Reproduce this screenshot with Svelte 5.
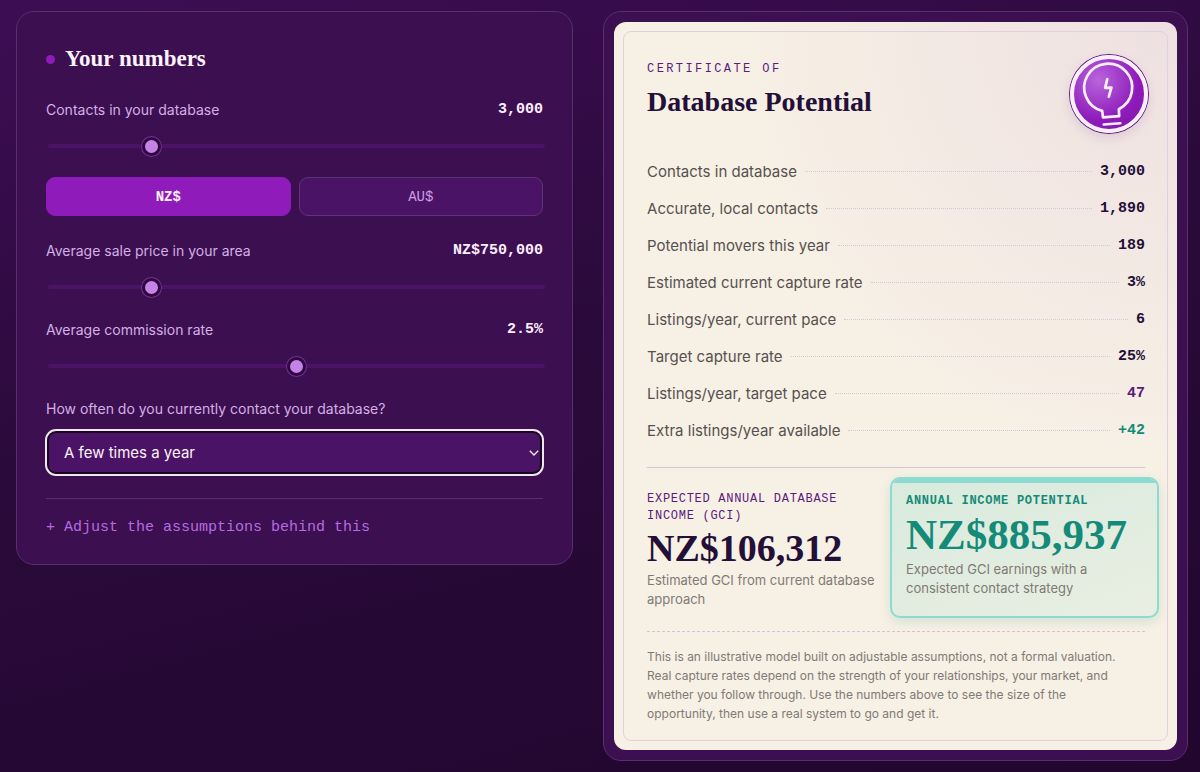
<script lang="ts">
let contacts = $state(3000);
let currency = $state("NZ$");
let price = $state(750000);
let commission = $state(2.5);
let frequency = $state("few");

const currencies = ["NZ$", "AU$"];

// Current capture rate for each contact habit.
const captureRates: Record<string, number> = { never: 0.01, yearly: 0.02, few: 0.03, monthly: 0.1 };
const accuracy = 0.63;
const moveRate = 0.1;
const targetRate = 0.25;

let local = $derived(Math.round(contacts * accuracy));
let movers = $derived(local * moveRate);
let rate = $derived(captureRates[frequency]);
let currentListings = $derived(movers * rate);
let targetListings = $derived(movers * targetRate);
let fee = $derived((price * commission) / 100);

const format = (n: number) => Math.round(n).toLocaleString("en-US");
const money = (n: number) => currency + Math.floor(n).toLocaleString("en-US");

let rows = $derived([
  { label: "Contacts in database", value: format(contacts) },
  { label: "Accurate, local contacts", value: format(local) },
  { label: "Potential movers this year", value: format(movers) },
  { label: "Estimated current capture rate", value: `${rate * 100}%` },
  { label: "Listings/year, current pace", value: format(currentListings) },
  { label: "Target capture rate", value: `${targetRate * 100}%` },
  { label: "Listings/year, target pace", value: format(targetListings), tone: "purple" },
  { label: "Extra listings/year available", value: `+${format(targetListings - currentListings)}`, tone: "green" },
]);
</script>

<main class="calculator">
  <section class="card inputs">
    <h2>Your numbers</h2>

    <div class="field">
      <div class="field-head">
        <label for="contacts">Contacts in your database</label>
        <output for="contacts">{format(contacts)}</output>
      </div>
      <input id="contacts" type="range" min="50" max="15000" step="50" bind:value={contacts} />
    </div>

    <div class="toggle">
      {#each currencies as code}
        <button class:active={currency === code} aria-pressed={currency === code} onclick={() => (currency = code)}>
          {code}
        </button>
      {/each}
    </div>

    <div class="field">
      <div class="field-head">
        <label for="price">Average sale price in your area</label>
        <output for="price">{money(price)}</output>
      </div>
      <input id="price" type="range" min="200000" max="3000000" step="10000" bind:value={price} />
    </div>

    <div class="field">
      <div class="field-head">
        <label for="commission">Average commission rate</label>
        <output for="commission">{commission}%</output>
      </div>
      <input id="commission" type="range" min="1" max="4" step="0.1" bind:value={commission} />
    </div>

    <div class="question">
      <label for="frequency">How often do you currently contact your database?</label>
      <div class="select">
        <select id="frequency" bind:value={frequency}>
          <option value="never">Rarely or never</option>
          <option value="yearly">Once a year</option>
          <option value="few">A few times a year</option>
          <option value="monthly">Every month</option>
        </select>
        <svg width="10" height="6" viewBox="0 0 10 6" fill="none" stroke="#fdf3fb" stroke-width="1.3" aria-hidden="true">
          <path d="M.8 .8L5 5L9.2 .8" />
        </svg>
      </div>
    </div>

    <div class="assumptions">
      <button>+ Adjust the assumptions behind this</button>
    </div>
  </section>

  <section class="card frame">
    <div class="paper">
      <header>
        <div>
          <p class="eyebrow">Certificate of</p>
          <h1>Database Potential</h1>
        </div>
        <div class="seal">
          <svg viewBox="-35 -35 70 70" fill="none" stroke="#fdeefc" stroke-linecap="round" stroke-linejoin="round" aria-hidden="true">
            <path d="M-6 23.4L-6.8 16.9A24 24 0 1 1 9.8 15.2L10.2 22.2Z" stroke-width="2.7" />
            <path d="M-5.4 30.6L11.4 29.2" stroke-width="2.5" />
            <path d="M-1.7 -14.8L-3.9 -6.2L2.4 -6.4L-.2 2.6" stroke-width="2.7" />
          </svg>
        </div>
      </header>

      <dl class="rows">
        {#each rows as row}
          <div class="row">
            <dt>{row.label}</dt>
            <dd class={row.tone}>{row.value}</dd>
          </div>
        {/each}
      </dl>

      <div class="figures">
        <div class="figure">
          <p class="caption">Expected annual database income (GCI)</p>
          <p class="amount">{money(currentListings * fee)}</p>
          <p class="note">Estimated GCI from current database approach</p>
        </div>
        <div class="figure highlight">
          <p class="caption">Annual income potential</p>
          <p class="amount">{money(targetListings * fee)}</p>
          <p class="note">Expected GCI earnings with a consistent contact strategy</p>
        </div>
      </div>

      <p class="disclaimer">
        This is an illustrative model built on adjustable assumptions, not a formal valuation. Real capture rates
        depend on the strength of your relationships, your market, and whether you follow through. Use the numbers
        above to see the size of the opportunity, then use a real system to go and get it.
      </p>
    </div>
  </section>
</main>

<style>
:global(body) {
  min-height: 100vh;
  background: linear-gradient(165deg, #3d0d54 0%, #2a0a3a 45%, #22062e 100%);
  font-family: Inter, "Liberation Sans", sans-serif;
}

.calculator {
  box-sizing: border-box;
  display: grid;
  grid-template-columns: 1fr 1.05fr;
  align-items: start;
  gap: 30px;
  padding: 11px 12px 10px 16px;
}

h1,
h2,
p,
dl,
dd {
  margin: 0;
}

.card {
  background: #3b0f50;
  border: 1px solid #57306c;
  border-radius: 18px;
}

.inputs {
  padding: 29px 29px 24px;
}

h2 {
  display: flex;
  align-items: center;
  gap: 10px;
  margin-bottom: 21px;
  color: #fdf3fb;
  font: bold 23px/36px "Liberation Serif", serif;
}

h2::before {
  content: "";
  width: 9px;
  height: 9px;
  border-radius: 50%;
  background: #8e1bba;
}

label {
  color: #d4b0e4;
  font-size: 14px;
  line-height: 24px;
}

.field {
  margin-bottom: 29px;
}

.field-head {
  display: flex;
  justify-content: space-between;
}

output {
  color: #fdeefc;
  font: bold 15px/24px "Liberation Mono", monospace;
}

input[type="range"] {
  appearance: none;
  display: block;
  width: 100%;
  height: 4px;
  margin: 22px 2px 0;
  border-radius: 2px;
  background: #4b1365;
}

input[type="range"]::-webkit-slider-thumb {
  appearance: none;
  box-sizing: border-box;
  width: 19px;
  height: 19px;
  border: 3px solid #2d0a3d;
  border-radius: 50%;
  background: #c583e8;
  box-shadow: 0 0 0 1px #7a2a9c;
}

.toggle {
  display: grid;
  grid-template-columns: 1fr 1fr;
  gap: 8px;
  margin-bottom: 23px;
}

.toggle button {
  height: 39px;
  border: 1px solid #5f3477;
  border-radius: 9px;
  background: #4b1365;
  color: #cba0e0;
  font: 14px "Liberation Mono", monospace;
}

.toggle .active {
  border-color: #8e1bba;
  background: #8e1bba;
  color: #fdf3fb;
  font-weight: bold;
}

.question label {
  display: block;
  margin-bottom: 9px;
}

.select {
  position: relative;
}

.select svg {
  position: absolute;
  top: 20px;
  right: 4px;
  pointer-events: none;
}

select {
  appearance: none;
  display: block;
  box-sizing: border-box;
  width: 100%;
  height: 45px;
  padding: 0 24px 0 15px;
  border: 3px solid #18071f;
  border-radius: 10px;
  outline: 2px solid #efe6f2;
  outline-offset: -1px;
  background: #4b1365;
  color: #fdf3fb;
  font: 15px Inter, "Liberation Sans", sans-serif;
}

.assumptions {
  margin-top: 23px;
  padding-top: 17px;
  border-top: 1px solid #57306c;
}

.assumptions button {
  display: block;
  padding: 0;
  border: 0;
  background: none;
  color: #b86be0;
  font: 15px/24px "Liberation Mono", monospace;
}

.frame {
  padding: 10px;
}

.paper {
  position: relative;
  padding: 33px 32px 27px 33px;
  border-radius: 12px;
  background: radial-gradient(circle at 100% 0, #eee0e1 0%, #f7f0e5 48%);
}

.paper::before {
  content: "";
  position: absolute;
  inset: 9px;
  border: 1px solid #e0d0e2;
  border-radius: 8px;
  pointer-events: none;
}

header {
  display: flex;
  justify-content: space-between;
  margin-bottom: 20px;
}

.eyebrow {
  margin-top: 5px;
  color: #5b1a7c;
  font: 12px/18px "Liberation Mono", monospace;
  letter-spacing: 0.2em;
  text-transform: uppercase;
}

h1 {
  margin-top: 6px;
  color: #230f38;
  font: bold 28px/36px "Liberation Serif", serif;
}

.seal {
  box-sizing: border-box;
  width: 78px;
  height: 78px;
  margin-right: -3px;
  border: 4px solid #fdeefc;
  border-radius: 50%;
  background: radial-gradient(circle at 35% 30%, #b865dc 0%, #8e1bba 60%, #7d15a8 100%);
  box-shadow: 0 0 0 1px #5b1a7c, 0 4px 12px rgba(91, 26, 124, 0.15);
}

.seal svg {
  display: block;
  width: 100%;
}

.row {
  display: flex;
  align-items: center;
  height: 37px;
  font-size: 15px;
}

.row dt {
  color: #56504f;
}

.row dd {
  display: flex;
  flex: 1;
  align-items: center;
  color: #230f38;
  font: bold 15px/24px "Liberation Mono", monospace;
}

.row dd::before {
  content: "";
  flex: 1;
  margin: 0 8px;
  border-top: 1px dotted #d6c6d8;
}

.row .purple {
  color: #5b1a7c;
}

.row .green {
  color: #148a78;
}

.figures {
  display: grid;
  grid-template-columns: 1fr 1fr;
  gap: 16px;
  margin-top: 18px;
  padding: 9px 0 13px;
  border-top: 1px solid #d6c3d6;
}

.figure {
  padding-top: 14px;
}

.caption {
  color: #5b1a7c;
  font: 12px/17px "Liberation Mono", monospace;
  letter-spacing: 0.06em;
  text-transform: uppercase;
}

.amount {
  margin: 2px 0;
  color: #230f38;
  font: bold 38px/42px "Liberation Serif", serif;
}

.note {
  color: #807a75;
  font-size: 13px;
  line-height: 19px;
}

.highlight {
  position: relative;
  overflow: hidden;
  margin: 0 -14px;
  padding: 14px 14px 18px;
  border: 2px solid #8cdbd1;
  border-radius: 10px;
  background: linear-gradient(160deg, #d8ebdd, #e9eee2);
  box-shadow: 0 4px 12px rgba(20, 138, 120, 0.15);
}

.highlight::before {
  content: "";
  position: absolute;
  inset: 0 0 auto;
  height: 4px;
  background: #8cdbd1;
}

.highlight .caption {
  color: #148a78;
  font-weight: bold;
}

.highlight .amount {
  color: #148a78;
  font-size: 43px;
  line-height: 46px;
}

.disclaimer {
  padding: 15px 8px 0 0;
  border-top: 1px dashed #d6c3d6;
  color: #807a75;
  font-size: 12px;
  line-height: 19px;
}
</style>
